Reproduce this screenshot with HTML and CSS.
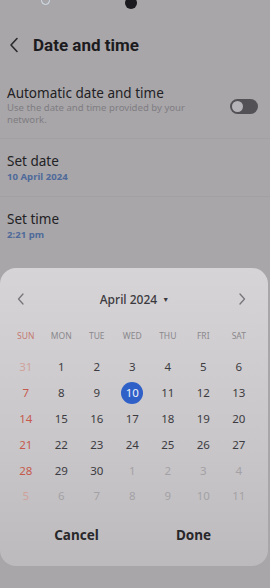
FILE: index.html
```html
<!DOCTYPE html>
<html>
<head>
<meta charset="utf-8">
<link rel="stylesheet" href="styles.css">
</head>
<body>
<div class="screen">
  <div class="statusbar">
    <span class="sb-icon"></span>
    <span class="camera"></span>
  </div>
  <div class="appbar">
    <svg class="back" width="10" height="16" viewBox="0 0 10 16"><path d="M8 1.5 L2 8 L8 14.5" fill="none" stroke="#2a2a2c" stroke-width="1.6" stroke-linecap="round" stroke-linejoin="round"/></svg>
    <h1 class="title">Date and time</h1>
  </div>
  <div class="list">
    <div class="item item-auto">
      <div class="item-text">
        <div class="item-title">Automatic date and time</div>
        <div class="item-sub">Use the date and time provided by your network.</div>
      </div>
      <div class="toggle"><span class="knob"></span></div>
    </div>
    <div class="item">
      <div class="item-text">
        <div class="item-title">Set date</div>
        <div class="item-value">10 April 2024</div>
      </div>
    </div>
    <div class="item">
      <div class="item-text">
        <div class="item-title">Set time</div>
        <div class="item-value">2:21 pm</div>
      </div>
    </div>
  </div>
  <div class="dialog">
    <div class="cal-head">
      <svg class="nav" width="8" height="12" viewBox="0 0 8 12"><path d="M6 1 L1.5 6 L6 11" fill="none" stroke="#77757a" stroke-width="1.3" stroke-linecap="round" stroke-linejoin="round"/></svg>
      <div class="month">April 2024 <span class="caret">&#9660;</span></div>
      <svg class="nav" width="8" height="12" viewBox="0 0 8 12"><path d="M2 1 L6.5 6 L2 11" fill="none" stroke="#77757a" stroke-width="1.3" stroke-linecap="round" stroke-linejoin="round"/></svg>
    </div>
    <div class="weekdays">
      <div class="wd sun">SUN</div><div class="wd">MON</div><div class="wd">TUE</div><div class="wd">WED</div><div class="wd">THU</div><div class="wd">FRI</div><div class="wd">SAT</div>
    </div>
    <div class="days">
      <div class="d sun dim">31</div><div class="d">1</div><div class="d">2</div><div class="d">3</div><div class="d">4</div><div class="d">5</div><div class="d">6</div>
      <div class="d sun">7</div><div class="d">8</div><div class="d">9</div><div class="d"><span class="sel">10</span></div><div class="d">11</div><div class="d">12</div><div class="d">13</div>
      <div class="d sun">14</div><div class="d">15</div><div class="d">16</div><div class="d">17</div><div class="d">18</div><div class="d">19</div><div class="d">20</div>
      <div class="d sun">21</div><div class="d">22</div><div class="d">23</div><div class="d">24</div><div class="d">25</div><div class="d">26</div><div class="d">27</div>
      <div class="d sun">28</div><div class="d">29</div><div class="d">30</div><div class="d dim">1</div><div class="d dim">2</div><div class="d dim">3</div><div class="d dim">4</div>
      <div class="d sun dim">5</div><div class="d dim">6</div><div class="d dim">7</div><div class="d dim">8</div><div class="d dim">9</div><div class="d dim">10</div><div class="d dim">11</div>
    </div>
    <div class="actions">
      <button class="btn">Cancel</button>
      <button class="btn">Done</button>
    </div>
  </div>
</div>
</body>
</html>
```

FILE: styles.css
```css
html, body {
  margin: 0;
  padding: 0;
}
body {
  width: 270px;
  height: 588px;
  overflow: hidden;
  background: #a8a6a9;
  font-family: "Noto Sans", "Open Sans", sans-serif;
  color: #1f1e21;
}
.screen {
  display: flex;
  flex-direction: column;
  height: 588px;
}
.statusbar {
  height: 20px;
  position: relative;
}
.sb-icon {
  position: absolute;
  left: 41px;
  top: -4px;
  width: 9px;
  height: 9px;
  border-radius: 50%;
  border: 1.5px solid #d6e4f0;
  box-sizing: border-box;
}
.camera {
  position: absolute;
  left: 125px;
  top: -3px;
  width: 12px;
  height: 12px;
  border-radius: 50%;
  background: #1b1a1e;
}
.appbar {
  display: flex;
  align-items: center;
  height: 50px;
  padding-left: 9px;
  gap: 14px;
}
.title {
  margin: 0;
  font-family: Roboto, "Noto Sans", sans-serif;
  font-size: 17px;
  font-weight: 700;
  color: #1c1b1e;
}
.list {
  display: flex;
  flex-direction: column;
  padding-top: 12px;
}
.item {
  display: flex;
  align-items: center;
  padding: 0 12px 0 7px;
  height: 57px;
  border-top: 1px solid #a2a0a3;
}
.item-auto {
  border-top: none;
  height: 54px;
  align-items: flex-start;
  padding-top: 2px;
}
.item-text {
  flex: 1;
}
.item-title {
  font-size: 13.5px;
  line-height: 18px;
  color: #222124;
}
.item-sub {
  font-size: 9.6px;
  line-height: 12px;
  color: #7f7d82;
  width: 200px;
}
.item-value {
  font-size: 9.6px;
  line-height: 13px;
  font-weight: 700;
  color: #4f6a9a;
}
.toggle {
  margin-top: 15px;
  width: 28px;
  height: 15px;
  border-radius: 8px;
  background: #535155;
  position: relative;
}
.knob {
  position: absolute;
  left: 2px;
  top: 2px;
  width: 11px;
  height: 11px;
  border-radius: 50%;
  background: #b5b3b7;
}
.dialog {
  margin-top: auto;
  margin-bottom: 22px;
  margin-right: 2px;
  height: 298px;
  border-radius: 16px;
  background: linear-gradient(#d6d4d7, #c8c6c9 60%, #bcbabd);
  display: flex;
  flex-direction: column;
  box-sizing: border-box;
  padding: 0 8px;
}
.cal-head {
  display: flex;
  align-items: center;
  justify-content: space-between;
  height: 32px;
  margin-top: 15px;
  padding: 0 14px 0 9px;
}
.month {
  font-size: 12px;
  font-weight: 500;
  color: #3a393d;
  margin-left: 6px;
}
.caret {
  font-size: 7px;
  vertical-align: 2px;
  margin-left: 2px;
}
.weekdays, .days {
  display: grid;
  grid-template-columns: repeat(7, 35.5px);
}
.weekdays {
  grid-auto-rows: 24px;
  margin-top: 9px;
}
.days {
  grid-auto-rows: 25.8px;
  margin-top: 6px;
}
.wd {
  font-size: 8.5px;
  color: #8a888c;
  text-align: center;
  line-height: 24px;
}
.wd.sun {
  color: #c47a72;
}
.d {
  font-size: 11.5px;
  color: #3c3b3f;
  display: flex;
  align-items: center;
  justify-content: center;
}
.d.sun {
  color: #c65a4d;
}
.d.dim {
  color: #a3a1a5;
}
.d.sun.dim {
  color: #d0a29c;
}
.sel {
  width: 22px;
  height: 22px;
  border-radius: 50%;
  background: #2f60c8;
  color: #eef2fb;
  display: flex;
  align-items: center;
  justify-content: center;
}
.actions {
  display: flex;
  margin-top: 6px;
  padding: 0 8px 0 10px;
  height: 40px;
  align-items: center;
}
.btn {
  flex: 1;
  background: none;
  border: none;
  font-family: inherit;
  font-size: 13.5px;
  font-weight: 700;
  color: #28272a;
  padding: 0;
}
```
